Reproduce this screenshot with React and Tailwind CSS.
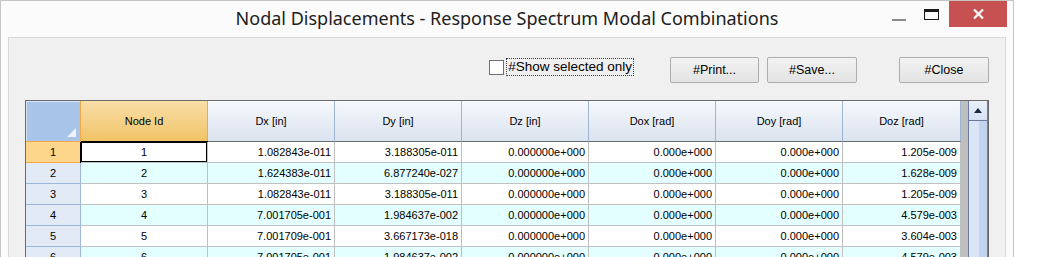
import React from 'react'

const cols = [
  { key: 'id', label: 'Node Id', w: 'w-[127px]', align: 'text-center' },
  { key: 'dx', label: 'Dx [in]', w: 'w-[127px]', align: 'text-right' },
  { key: 'dy', label: 'Dy [in]', w: 'w-[127px]', align: 'text-right' },
  { key: 'dz', label: 'Dz [in]', w: 'w-[127px]', align: 'text-right' },
  { key: 'rx', label: 'Dox [rad]', w: 'w-[127px]', align: 'text-right' },
  { key: 'ry', label: 'Doy [rad]', w: 'w-[127px]', align: 'text-right' },
  { key: 'rz', label: 'Doz [rad]', w: 'w-[118px]', align: 'text-right' },
]

const filas = [
  ['1', '1.082843e-011', '3.188305e-011', '0.000000e+000', '0.000e+000', '0.000e+000', '1.205e-009'],
  ['2', '1.624383e-011', '6.877240e-027', '0.000000e+000', '0.000e+000', '0.000e+000', '1.628e-009'],
  ['3', '1.082843e-011', '3.188305e-011', '0.000000e+000', '0.000e+000', '0.000e+000', '1.205e-009'],
  ['4', '7.001705e-001', '1.984637e-002', '0.000000e+000', '0.000e+000', '0.000e+000', '4.579e-003'],
  ['5', '7.001709e-001', '3.667173e-018', '0.000000e+000', '0.000e+000', '0.000e+000', '3.604e-003'],
  ['6', '7.001705e-001', '1.984637e-002', '0.000000e+000', '0.000e+000', '0.000e+000', '4.579e-003'],
]

function Boton({ children, className = '' }) {
  return (
    <button
      className={`h-[26px] rounded-[2px] border border-[#adadad] bg-gradient-to-b from-[#f2f2f2] to-[#e3e3e3] text-[12.5px] text-black ${className}`}
    >
      {children}
    </button>
  )
}

export default function App() {
  return (
    <div className="flex h-[257px] w-[1049px] overflow-hidden bg-white font-['Liberation_Sans',Arial,sans-serif]">
      {/* Ventana */}
      <div className="flex h-[300px] w-[1014px] flex-col border-l border-r border-t border-[#c4c4c4] bg-[#fbfbfb]">
        {/* Barra de título */}
        <div className="grid h-[36px] grid-cols-[1fr_auto_1fr]">
          <div />
          <div className="pt-[4px] font-['Noto_Sans',sans-serif] text-[18px] text-[#202020]">
            Nodal Displacements - Response Spectrum Modal Combinations
          </div>
          <div className="flex items-start justify-end pr-[6px]">
            <div className="mt-[18px] mr-[18px] h-[2px] w-[14px] bg-[#8a8a8a]" />
            <div className="mt-[8px] mr-[10px] h-[11px] w-[15px] border border-t-[3px] border-[#1a1a1a]" />
            <div className="flex h-[26px] w-[58px] items-center justify-center bg-[#c75050]">
              <svg width="11" height="10" viewBox="0 0 11 10">
                <path d="M1 0.5 L10 9.5 M10 0.5 L1 9.5" stroke="white" strokeWidth="2.2" />
              </svg>
            </div>
          </div>
        </div>

        {/* Área cliente */}
        <div className="mx-[7px] flex-1 border border-[#d9d9d9] bg-[#f0f0f0] px-[16px]">
          {/* Barra de botones */}
          <div className="flex h-[62px] items-start pt-[19px]">
            <div className="ml-auto flex items-center pt-[1px]">
              <div className="h-[15px] w-[15px] border border-[#707070] bg-white" />
              <span className="ml-[2px] border border-dotted border-[#404040] px-[1px] text-[13.5px] leading-[16px] text-black">
                #Show selected only
              </span>
            </div>
            <Boton className="ml-[36px] w-[89px]">#Print...</Boton>
            <Boton className="ml-[8px] w-[90px]">#Save...</Boton>
            <Boton className="ml-[42px] w-[90px]">#Close</Boton>
          </div>

          {/* Grilla */}
          <div className="flex w-[964px] border border-[#6b6b6b] bg-[#bfbfbf] text-[11px] text-black">
            <div className="flex flex-col">
              {/* Encabezado */}
              <div className="flex h-[41px]">
                <div className="relative w-[55px] border-r border-b border-[#f0a848] bg-[#a9c4e9] shadow-[inset_1px_1px_0_#d6e3f5]">
                  <svg className="absolute right-[4px] bottom-[4px]" width="9" height="9" viewBox="0 0 9 9">
                    <path d="M9 0 L9 9 L0 9 Z" fill="#eef3fb" />
                  </svg>
                </div>
                {cols.map((c, i) => (
                  <div
                    key={c.key}
                    className={`${c.w} flex items-center justify-center border-b border-r ${
                      i === 0
                        ? 'border-[#f0a848] bg-gradient-to-b from-[#fadfa8] to-[#f0c365]'
                        : 'border-b-[#6b6b6b] border-r-[#9db5d3] bg-gradient-to-b from-[#f7f9fc] to-[#d9e2ef]'
                    }`}
                  >
                    {c.label}
                  </div>
                ))}
              </div>

              {/* Filas */}
              {filas.map((f, r) => (
                <div key={r} className={`flex h-[21px] ${r % 2 ? 'bg-[#e3ffff]' : 'bg-white'}`}>
                  <div
                    className={`flex w-[55px] items-center justify-center border-r border-b ${
                      r === 0 ? 'border-[#f0a848] bg-[#fdd68c]' : 'border-[#9db8da] bg-[#e2eaf6]'
                    }`}
                  >
                    {r + 1}
                  </div>
                  {cols.map((c, i) => (
                    <div
                      key={c.key}
                      className={`${c.w} ${c.align} border-r border-b border-[#c0c0c0] px-[3px] leading-[20px] ${
                        r === 0 && i === 0 ? 'border-[#000] shadow-[inset_0_0_0_1px_#000,-1px_0_0_#000,0_-1px_0_#000] bg-white' : ''
                      }`}
                    >
                      {f[i]}
                    </div>
                  ))}
                </div>
              ))}
            </div>

            {/* Relleno gris */}
            <div className="w-[7px]" />

            {/* Scrollbar */}
            <div className="flex w-[20px] flex-col border-l border-r border-[#6a7b9c] bg-[#c2d4f0]">
              <div className="flex h-[20px] items-center justify-center border-b border-[#6a7b9c] bg-gradient-to-b from-[#eaf1fb] to-[#d5e2f5]">
                <svg width="8" height="5" viewBox="0 0 8 5">
                  <path d="M0 5 L4 0 L8 5 Z" fill="#1c2a40" />
                </svg>
              </div>
              <div className="flex flex-1">
                <div className="w-[10px] bg-[#dae6f8]" />
                <div className="flex-1 bg-[#c2d4f0]" />
              </div>
            </div>
          </div>
        </div>
      </div>
    </div>
  )
}
